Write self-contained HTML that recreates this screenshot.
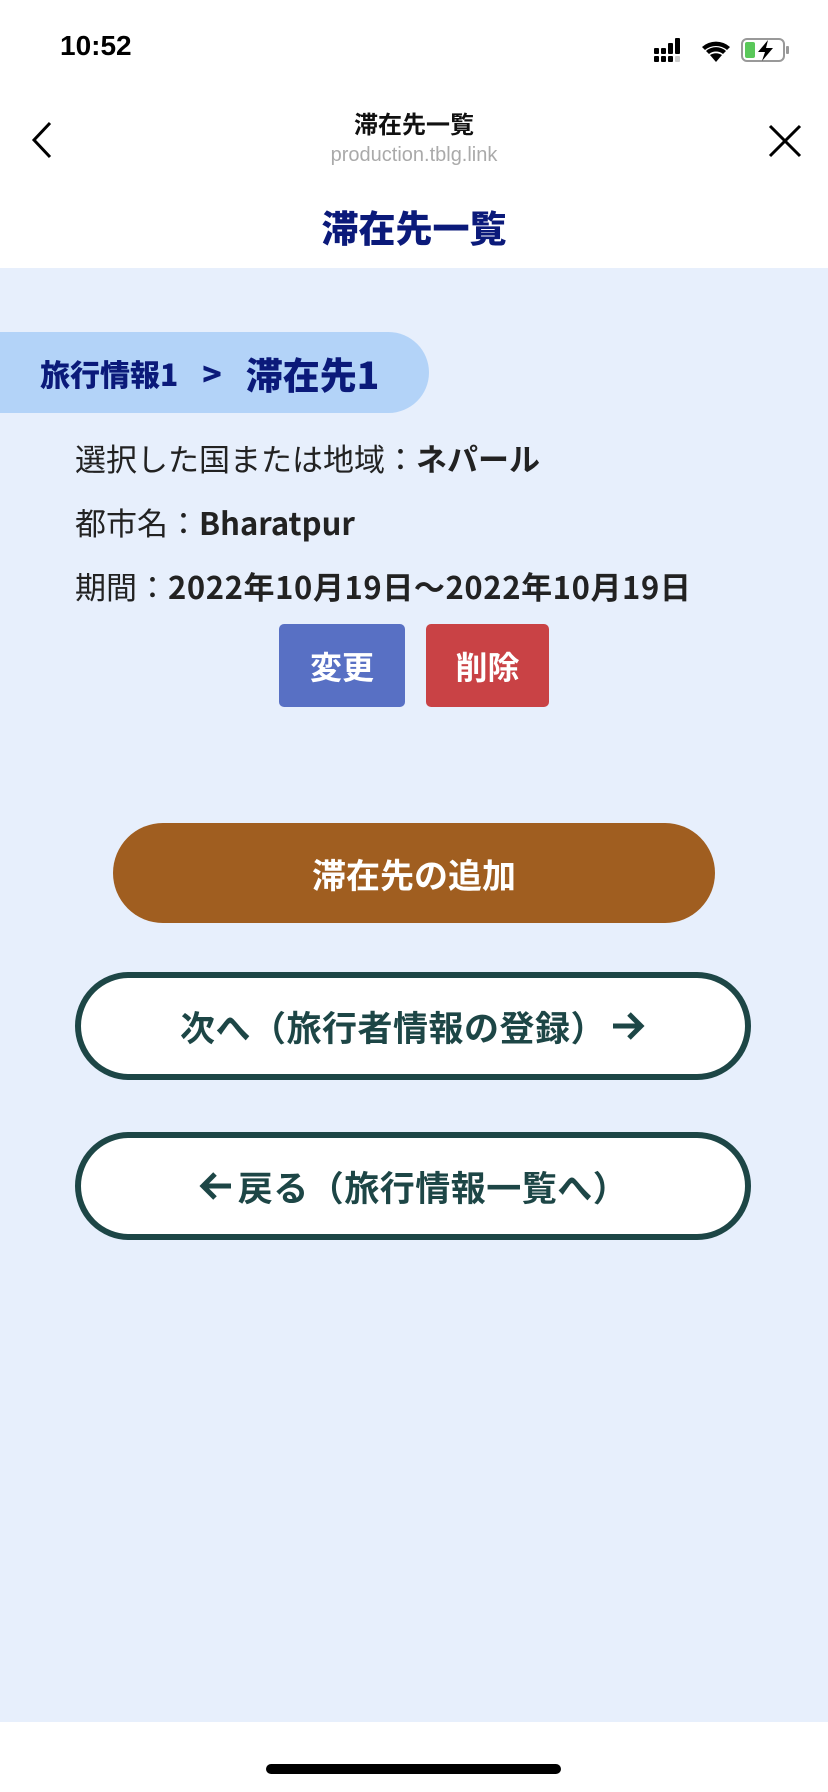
<!DOCTYPE html>
<html><head><meta charset="utf-8"><style>
*{margin:0;padding:0;box-sizing:border-box}
body{width:828px;height:1792px;background:#fff;font-family:"Noto Sans CJK JP","Liberation Sans",sans-serif;position:relative;overflow:hidden}
.a{position:absolute}
.c{left:0;width:828px;text-align:center}
.btn{position:absolute;display:flex;align-items:center;justify-content:center;font-weight:bold;color:#fff}
.ol{position:absolute;left:75px;width:676px;height:108px;border:6px solid #1d4646;border-radius:54px;background:#fff;color:#1d4646;font-weight:bold;font-size:35px;letter-spacing:0.5px;display:flex;align-items:center;justify-content:center}
</style></head><body>
<div class="a" style="left:60px;top:30px;font-size:28px;font-weight:600;color:#000;font-family:'Liberation Sans',sans-serif">10:52</div>
<div class="a" style="left:654px;top:38px;">
<svg width="140" height="30" viewBox="0 0 140 30">
<g fill="#000"><rect x="0" y="10" width="5" height="6" rx="1"/><rect x="0" y="18" width="5" height="6" rx="1"/><rect x="7" y="10" width="5" height="6" rx="1"/><rect x="7" y="18" width="5" height="6" rx="1"/><rect x="14" y="5" width="5" height="11" rx="1"/><rect x="14" y="18" width="5" height="6" rx="1"/><rect x="21" y="0" width="5" height="16" rx="1"/></g><rect x="21" y="18" width="5" height="6" rx="1" fill="#ccc"/>
<path d="M62 24 L56 17 A11 11 0 0 1 68 17 Z M52 13 A15 15 0 0 1 72 13 L69 16 A11 11 0 0 0 55 16Z M48 9 A21 21 0 0 1 76 9 L73 12 A17 17 0 0 0 51 12Z" fill="#000"/>
<rect x="88" y="1" width="42" height="22" rx="5" fill="none" stroke="#999" stroke-width="2"/><rect x="91" y="4" width="10" height="16" rx="2" fill="#5ac85a"/><rect x="132" y="8" width="3" height="8" rx="1" fill="#999"/>
<path d="M114 2 L104 14 H111 L108 23 L119 10 H112 Z" fill="#000"/></svg></div>
<svg class="a" style="left:28px;top:121px" width="26" height="38"><path d="M22 2 L6 19 L22 36" fill="none" stroke="#000" stroke-width="3"/></svg>
<svg class="a" style="left:767px;top:124px" width="36" height="34"><path d="M3 2 L33 32 M33 2 L3 32" stroke="#000" stroke-width="3"/></svg>
<div class="a c" style="top:105px;font-size:24px;font-weight:bold;color:#111">滞在先一覧</div>
<div class="a c" style="top:144px;font-size:20px;color:#aaa;font-family:'Liberation Sans',sans-serif">production.tblg.link</div>
<div class="a c" style="top:201px;font-size:37px;font-weight:900;color:#0b1a7a;line-height:50px">滞在先一覧</div>
<div class="a" style="left:0;top:268px;width:828px;height:1454px;background:#e7effc"></div>
<div class="a" style="left:0;top:332px;width:429px;height:81px;background:#b3d3f8;border-radius:0 41px 41px 0"></div>
<div class="a" style="left:40px;top:352px;height:42px;color:#0b1a7a;font-weight:900;white-space:nowrap;display:flex;align-items:center"><span style="font-size:30px">旅行情報1</span><span style="font-size:32px;margin-left:24px">&gt;</span><span style="font-size:37px;margin-left:24px">滞在先1</span></div>
<div class="a" style="left:75px;top:436px;font-size:31px;color:#222;white-space:nowrap;line-height:44px">選択した国または地域：<b>ネパール</b></div>
<div class="a" style="left:75px;top:500px;font-size:31px;color:#222;white-space:nowrap;line-height:44px">都市名：<b>Bharatpur</b></div>
<div class="a" style="left:75px;top:564px;font-size:31px;color:#222;white-space:nowrap;line-height:44px">期間：<b style="letter-spacing:0.6px">2022年10月19日～2022年10月19日</b></div>
<div class="btn" style="left:279px;top:624px;width:126px;height:83px;background:#5870c4;border-radius:5px;font-size:32px">変更</div>
<div class="btn" style="left:426px;top:624px;width:123px;height:83px;background:#c94245;border-radius:5px;font-size:32px">削除</div>
<div class="btn" style="left:113px;top:823px;width:602px;height:100px;background:#a05e20;border-radius:50px;font-size:34px">滞在先の追加</div>
<div class="ol" style="top:972px">次へ（旅行者情報の登録）<svg width="36" height="32" style="margin-left:4px"><path d="M3 16 H31 M19 4 L31 16 L19 28" fill="none" stroke="#1d4646" stroke-width="5"/></svg></div>
<div class="ol" style="top:1132px"><svg width="36" height="32" style="margin-right:4px"><path d="M33 16 H5 M17 4 L5 16 L17 28" fill="none" stroke="#1d4646" stroke-width="5"/></svg>戻る（旅行情報一覧へ）</div>
<div class="a" style="left:266px;top:1764px;width:295px;height:10px;border-radius:5px;background:#000"></div>
</body></html>
